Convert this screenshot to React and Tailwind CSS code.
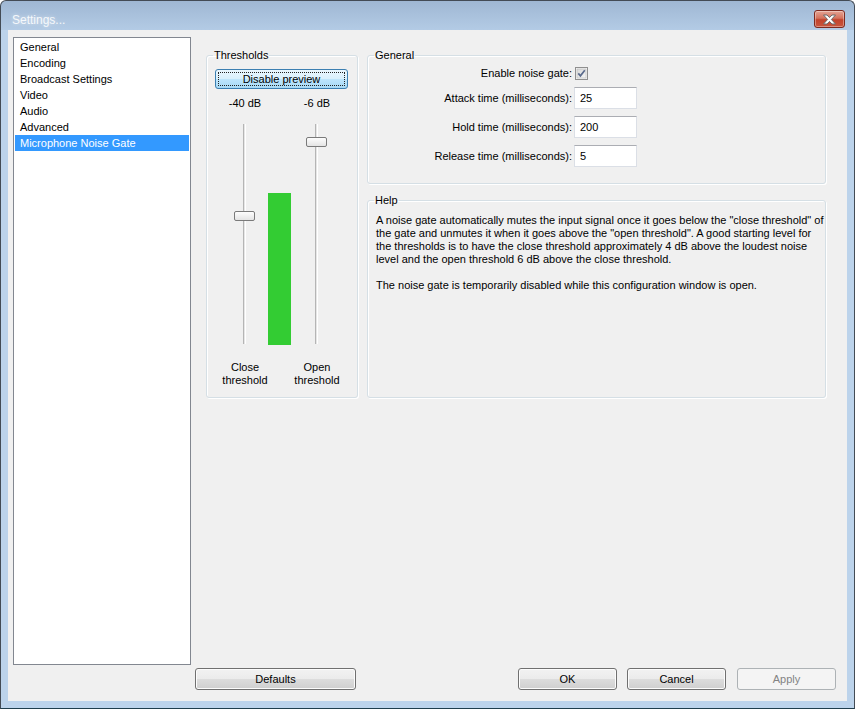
const CATEGORIES = [
  'General',
  'Encoding',
  'Broadcast Settings',
  'Video',
  'Audio',
  'Advanced',
  'Microphone Noise Gate',
]

const HELP_LINES = [
  'A noise gate automatically mutes the input signal once it goes below the "close threshold" of',
  'the gate and unmutes it when it goes above the "open threshold". A good starting level for',
  'the thresholds is to have the close threshold approximately 4 dB above the loudest noise',
  'level and the open threshold 6 dB above the close threshold.',
]

const btn = 'h-[22px] rounded-[3px] border border-[#707070] bg-[linear-gradient(to_bottom,#f2f2f2_0%,#ebebeb_50%,#dddddd_50%,#cfcfcf_100%)] shadow-[inset_0_0_0_1px_#fcfcfc] text-[11px] leading-[20px] text-black'

function GroupBox({ title, className, children }) {
  return (
    <fieldset className={`rounded-[3px] border border-[#d5dfe5] shadow-[1px_1px_0_#ffffff,inset_1px_1px_0_#ffffff] ${className}`}>
      <legend className="ml-[6px] px-[1px] leading-[13px]">{title}</legend>
      {children}
    </fieldset>
  )
}

function Slider({ thumbTop }) {
  return (
    <div className="relative w-[21px] h-[220px] flex justify-center">
      <div className="w-[3px] h-full border-l border-[#b5b5b5] bg-[#e6e6e6] border-r border-r-[#ffffff]" />
      <div
        className="absolute left-0 w-[21px] h-[10px] rounded-[2px] border border-[#7a7a7a] bg-[linear-gradient(to_bottom,#fdfdfd,#e4e4e4)]"
        style={{ top: thumbTop }}
      />
    </div>
  )
}

function TextBox({ value }) {
  return (
    <div className="ml-[2px] w-[63px] h-[22px] border border-[#dbdfe6] border-t-[#abadb3] bg-white pl-[5px] leading-[20px]">
      {value}
    </div>
  )
}

export default function App() {
  return (
    <div className="w-[855px] h-[709px] bg-white font-['Liberation_Sans',Arial,sans-serif] text-[11px] text-black">
      <div className="h-full flex flex-col rounded-t-[6px] border border-[#434b55] border-b-[#1f3d4c] bg-[linear-gradient(to_bottom,#9fb7d3_0px,#b3cbe5_29px,#bcd3eb_29px,#bcd3eb_100%)]">
        {/* title bar */}
        <div className="h-[29px] flex justify-between shrink-0">
          <span className="ml-[11px] mt-[12px] text-[12px] leading-[14px] text-[#f5f8fb] [text-shadow:0_0_4px_rgba(255,255,255,0.6)]">
            Settings...
          </span>
          <div className="mt-[9px] mr-[9px] w-[31px] h-[18px] rounded-[3px] border border-[#7d2a1f] bg-[linear-gradient(to_bottom,#e5a494_0%,#d4725d_45%,#c2432c_55%,#c9563d_100%)] shadow-[inset_0_0_0_1px_rgba(255,255,255,0.35)] flex items-center justify-center">
            <svg width="15" height="11" viewBox="0 0 15 11">
              <path
                d="M1.5 1 H5 L7.5 3.6 L10 1 H13.5 L9.4 5.5 L13.5 10 H10 L7.5 7.4 L5 10 H1.5 L5.6 5.5 Z"
                fill="#ffffff"
                stroke="#6b6b6b"
                strokeWidth="1"
                strokeLinejoin="round"
              />
            </svg>
          </div>
        </div>

        {/* client area */}
        <div className="mx-[7px] mb-[7px] flex-1 bg-[#f0f0f0] flex pt-[7px] pb-[11px] pl-[5px]">
          <div className="w-[178px] h-[628px] shrink-0 border border-[#828790] bg-white pt-[1px]">
            {CATEGORIES.map((c, i) => (
              <div
                key={c}
                className={`mx-[1px] h-[16px] leading-[16px] pl-[5px] whitespace-nowrap ${i === CATEGORIES.length - 1 ? 'bg-[#3399ff] text-white' : ''}`}
              >
                {c}
              </div>
            ))}
          </div>

          <div className="ml-[4px] w-[641px] flex flex-col">
            <div className="mt-[12px] ml-[11px] flex">
              <GroupBox title="Thresholds" className="w-[152px] h-[349px] shrink-0">
                <button className="mt-[7px] ml-[8px] w-[133px] h-[20px] rounded-[3px] border border-[#3c7fb1] bg-[linear-gradient(to_bottom,#eaf6fd_0%,#d9f0fc_50%,#bee6fd_50%,#a7d9f5_100%)] p-[2px]">
                  <div className="h-full border border-dotted border-[#222] leading-[12px]">Disable preview</div>
                </button>
                <div className="mt-[8px] ml-[2px] flex leading-[13px]">
                  <div className="w-[72px] text-center">-40 dB</div>
                  <div className="w-[72px] text-center">-6 dB</div>
                </div>
                <div className="mt-[14px] flex items-start">
                  <div className="ml-[27px]">
                    <Slider thumbTop={87} />
                  </div>
                  <div className="ml-[13px] mt-[69px] w-[23px] h-[152px] bg-[#33cc33]" />
                  <div className="ml-[15px]">
                    <Slider thumbTop={13} />
                  </div>
                </div>
                <div className="mt-[16px] ml-[2px] flex leading-[13px]">
                  <div className="w-[72px] text-center">Close<br />threshold</div>
                  <div className="w-[72px] text-center">Open<br />threshold</div>
                </div>
              </GroupBox>

              <div className="ml-[9px] w-[459px] flex flex-col">
                <GroupBox title="General" className="h-[135px]">
                  <div className="mt-[5px] flex items-center h-[13px]">
                    <div className="w-[204px] text-right leading-[13px]">Enable noise gate:</div>
                    <svg className="ml-[3px]" width="13" height="13" viewBox="0 0 13 13">
                      <defs>
                        <linearGradient id="cb" x1="0" y1="0" x2="1" y2="1">
                          <stop offset="0" stopColor="#d8d8d8" />
                          <stop offset="1" stopColor="#f6f6f6" />
                        </linearGradient>
                      </defs>
                      <rect x="0.5" y="0.5" width="12" height="12" fill="#f4f4f4" stroke="#8f8f8f" />
                      <rect x="2" y="2" width="9" height="9" fill="url(#cb)" stroke="#b9b9b9" strokeWidth="0.6" />
                      <path d="M3.3 6.4 L5.4 8.8 L9.8 3.2" fill="none" stroke="#5a6a8c" strokeWidth="1.7" />
                    </svg>
                  </div>
                  {[
                    ['Attack time (milliseconds):', '25'],
                    ['Hold time (milliseconds):', '200'],
                    ['Release time (milliseconds):', '5'],
                  ].map(([label, val]) => (
                    <div key={label} className="mt-[7px] flex items-center">
                      <div className="w-[204px] text-right leading-[13px]">{label}</div>
                      <TextBox value={val} />
                    </div>
                  ))}
                </GroupBox>

                <GroupBox title="Help" className="mt-[10px] h-[204px]">
                  <div className="mt-[7px] pl-[8px] leading-[13px] whitespace-nowrap">
                    {HELP_LINES.map(l => (
                      <div key={l}>{l}</div>
                    ))}
                    <div className="h-[13px]" />
                    <div>The noise gate is temporarily disabled while this configuration window is open.</div>
                  </div>
                </GroupBox>
              </div>
            </div>

            <div className="mt-auto flex justify-between">
              <button className={`${btn} w-[161px]`}>Defaults</button>
              <div className="flex">
                <button className={`${btn} w-[99px]`}>OK</button>
                <button className={`${btn} w-[99px] ml-[10px]`}>Cancel</button>
                <button className="ml-[11px] w-[99px] h-[22px] rounded-[3px] border border-[#adb2b5] bg-[#f4f4f4] text-[#838383] leading-[20px]">
                  Apply
                </button>
              </div>
            </div>
          </div>
        </div>
      </div>
    </div>
  )
}
